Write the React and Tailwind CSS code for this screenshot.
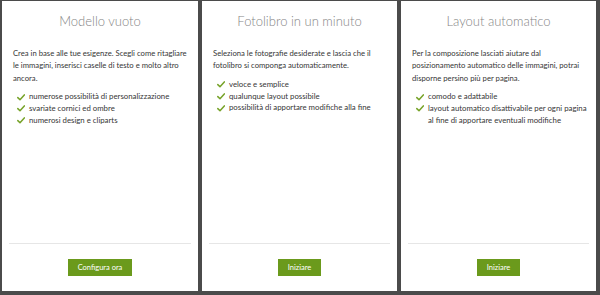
import React from "react";

function Check() {
  return (
    <svg width="8" height="7" viewBox="0 0 8 7" className="shrink-0 mt-[2.5px]">
      <path d="M0.8 3.6 L3 5.8 L7.3 0.9" fill="none" stroke="#77a329" strokeWidth="1.5" strokeLinecap="round" strokeLinejoin="round" />
    </svg>
  );
}

function Card({ title, body, items, button, width }) {
  return (
    <div className={`${width} h-[290px] bg-white flex flex-col`}>
      <div className="pt-[10px] text-center text-[13px] leading-[20px] font-light text-[#858585]">{title}</div>
      <div className="mt-[16px] px-[11px] text-[7.7px] leading-[12.4px] text-[#363636] whitespace-nowrap">
        {body.map((l, i) => (
          <div key={i}>{l}</div>
        ))}
      </div>
      <ul className="mt-[7px] pl-[15px] flex flex-col text-[7.8px] leading-[11.7px] text-[#363636] whitespace-nowrap">
        {items.map((it, i) => (
          <li key={i} className="flex gap-[4px]">
            <Check />
            <div>
              {it.map((l, j) => (
                <div key={j}>{l}</div>
              ))}
            </div>
          </li>
        ))}
      </ul>
      <div className="flex-1" />
      <div className="mx-[7px] h-px bg-[#e6e6e6]" />
      <div className="mt-[15px] mb-[15px] flex justify-center">
        <button className="h-[17px] px-[10px] bg-[#6b9a1c] text-white text-[7.5px] leading-[17px]">{button}</button>
      </div>
    </div>
  );
}

export default function App() {
  return (
    <div className="w-[600px] h-[295px] bg-[#4b4b4b] flex gap-[4px] pl-[2px] pt-[1px]" style={{ fontFamily: "Lato, 'Open Sans', sans-serif" }}>
      <Card
        width="w-[196px]"
        title="Modello vuoto"
        body={["Crea in base alle tue esigenze. Scegli come ritagliare", "le immagini, inserisci caselle di testo e molto altro", "ancora."]}
        items={[["numerose possibilità di personalizzazione"], ["svariate cornici ed ombre"], ["numerosi design e cliparts"]]}
        button="Configura ora"
      />
      <Card
        width="w-[195px]"
        title="Fotolibro in un minuto"
        body={["Seleziona le fotografie desiderate e lascia che il", "fotolibro si componga automaticamente."]}
        items={[["veloce e semplice"], ["qualunque layout possibile"], ["possibilità di apportare modifiche alla fine"]]}
        button="Iniziare"
      />
      <Card
        width="w-[195px]"
        title="Layout automatico"
        body={["Per la composizione lasciati aiutare dal", "posizionamento automatico delle immagini, potrai", "disporne persino più per pagina."]}
        items={[["comodo e adattabile"], ["layout automatico disattivabile per ogni pagina", "al fine di apportare eventuali modifiche"]]}
        button="Iniziare"
      />
    </div>
  );
}
